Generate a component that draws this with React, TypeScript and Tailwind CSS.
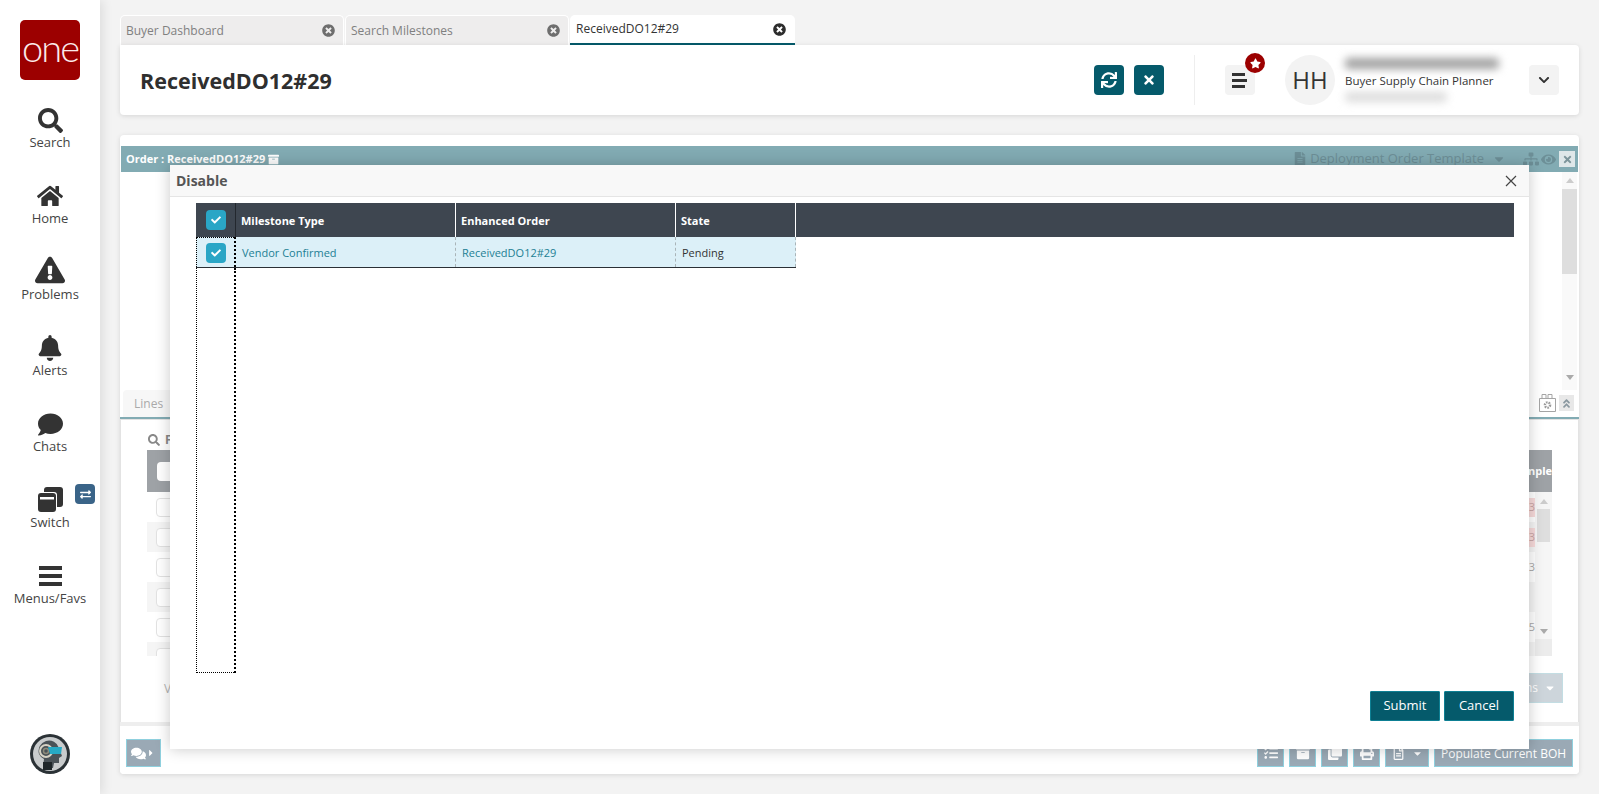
import React from 'react';
import {
  FaSearch, FaHome, FaExclamationTriangle, FaBell, FaComment, FaComments, FaSync, FaTimes, FaStar, FaChevronDown,
  FaCheck, FaTimesCircle, FaExchangeAlt, FaPrint, FaEye, FaCaretDown, FaCaretRight, FaSitemap, FaFileAlt, FaAngleDoubleUp,
  FaClone, FaArchive, FaTasks, FaRegFileAlt,
} from 'react-icons/fa';

const NavItem: React.FC<{ icon: React.ReactNode; label: string; badge?: boolean }> = ({ icon, label, badge }) => (
  <div className="relative flex h-[76px] w-full flex-col items-center">
    <div className="flex h-[28px] items-end justify-center text-[#333333]">{icon}</div>
    <div className="text-[13px] leading-[18px] text-[#444444]">{label}</div>
    {badge && (
      <div className="absolute left-[75px] top-[-1px] flex h-[20px] w-[20px] items-center justify-center rounded-[4px] bg-[#3a6488] text-[11px] text-white">
        <FaExchangeAlt />
      </div>
    )}
  </div>
);

const Sidebar = () => (
  <aside className="relative z-20 flex h-full w-[100px] shrink-0 flex-col items-center bg-white pt-5 shadow-[3px_0_10px_rgba(0,0,0,0.09)]">
    <div className="mb-[25px] flex h-[60px] w-[60px] items-center justify-center rounded-[5px] bg-[#9c0000] pb-[6px] font-['Lato',sans-serif] text-[38px] font-light leading-none tracking-[-2px] text-[#fbeaea]">
      one
    </div>
    <NavItem icon={<FaSearch className="text-[25px]" />} label="Search" />
    <NavItem icon={<FaHome className="text-[26px]" />} label="Home" />
    <NavItem icon={<FaExclamationTriangle className="text-[30px]" />} label="Problems" />
    <NavItem icon={<FaBell className="text-[26px]" />} label="Alerts" />
    <NavItem icon={<FaComment className="text-[25px]" />} label="Chats" />
    <NavItem
      icon={
        <svg width="26" height="26" viewBox="0 0 26 26" fill="#333333">
          <rect x="7" y="0" width="19" height="20" rx="3" />
          <rect x="0" y="5" width="20" height="21" rx="3" fill="#ffffff" />
          <rect x="1" y="6" width="18" height="19" rx="3" />
          <rect x="3" y="10" width="14" height="2.5" fill="#ffffff" />
        </svg>
      }
      label="Switch"
      badge
    />
    <NavItem
      icon={
        <div className="mb-[3px] flex w-[23px] flex-col gap-[4px]">
          <div className="h-[4px] bg-[#333333]" />
          <div className="h-[4px] bg-[#333333]" />
          <div className="h-[4px] bg-[#333333]" />
        </div>
      }
      label="Menus/Favs"
    />
    <div className="mb-5 mt-auto h-[40px] w-[40px]">
      <svg width="40" height="40" viewBox="0 0 40 40">
        <circle cx="20" cy="20" r="20" fill="#2b3236" />
        <circle cx="20" cy="20" r="17" fill="#c9cccd" />
        <path d="M9 20a10 10 0 0 1 20-6l3 8-3 2v5h-5l-1 5H13l1-9a10 10 0 0 1-5-5z" fill="#4a5257" />
        <circle cx="16" cy="17" r="6" fill="none" stroke="#d6d2c4" strokeWidth="2" />
        <circle cx="16" cy="17" r="2.5" fill="none" stroke="#8c8a7a" strokeWidth="1.5" />
        <path d="M18 13h14l-1 7H20z" fill="#27a9c4" />
        <path d="M13 28h9v8h-9z" fill="#1f2629" />
      </svg>
    </div>
  </aside>
);

const Tab: React.FC<{ label: string; active?: boolean }> = ({ label, active }) => (
  <div
    className={
      active
        ? 'flex h-[30px] w-[225px] items-center justify-between rounded-t-[5px] border-b-2 border-[#055a6b] bg-white pl-[6px] pr-[9px] text-[12px] text-[#333333]'
        : 'flex h-[30px] w-[224px] items-center justify-between rounded-t-[5px] border border-b-0 border-white bg-[#eeeded] pl-[5px] pr-[8px] text-[12px] text-[#808080]'
    }
  >
    <span>{label}</span>
    <FaTimesCircle className={active ? 'text-[13px] text-[#2d2d2d]' : 'text-[13px] text-[#6e6e6e]'} />
  </div>
);

const Header = () => (
  <div className="flex h-[70px] items-center rounded-b-[4px] rounded-tr-[4px] bg-white shadow-[0_1px_5px_rgba(0,0,0,0.12)]">
    <h1 className="ml-[20px] pt-[2px] text-[21.5px] font-bold text-[#2f2f2f]">ReceivedDO12#29</h1>
    <div className="ml-auto flex items-center">
      <button className="flex h-[30px] w-[30px] items-center justify-center rounded-[4px] bg-[#055a6b] text-[16px] text-white">
        <FaSync />
      </button>
      <button className="ml-[10px] flex h-[30px] w-[30px] items-center justify-center rounded-[4px] bg-[#055a6b] text-[14px] text-white">
        <FaTimes />
      </button>
      <div className="ml-[30px] h-[50px] w-px bg-[#eeeeee]" />
      <div className="relative ml-[30px] flex h-[30px] w-[30px] flex-col items-start justify-center gap-[3px] rounded-[4px] bg-[#f3f3f3] pl-[7px]">
        <div className="h-[3px] w-[13px] bg-[#333333]" />
        <div className="h-[3px] w-[15px] bg-[#333333]" />
        <div className="h-[3px] w-[13px] bg-[#333333]" />
        <div className="absolute left-[20px] top-[-12px] flex h-[20px] w-[20px] items-center justify-center rounded-full bg-[#9c0000] text-[11px] text-white">
          <FaStar />
        </div>
      </div>
      <div className="ml-[30px] flex h-[50px] w-[50px] items-center justify-center rounded-full bg-[#f3f3f3] text-[24px] text-[#333333]">
        HH
      </div>
      <div className="ml-[5px] flex h-[50px] w-[164px] flex-col justify-between">
        <div className="ml-[5px] mt-[3px] h-[11px] w-[154px] rounded-sm bg-[#a0a0a0] blur-[4px]" />
        <div className="ml-[5px] whitespace-nowrap text-[11.5px] leading-[16px] text-[#333333]">Buyer Supply Chain Planner</div>
        <div className="mb-[3px] ml-[5px] h-[10px] w-[102px] rounded-sm bg-[#dcdcdc] blur-[4px]" />
      </div>
      <button className="ml-[25px] mr-[20px] flex h-[30px] w-[30px] items-center justify-center rounded-[4px] bg-[#f3f3f3] text-[12px] text-[#333333]">
        <FaChevronDown />
      </button>
    </div>
  </div>
);

const backRows = [
  { value: '3', pink: true },
  { value: '3', pink: true },
  { value: '3', pink: false },
  { value: '', pink: false },
  { value: '5', pink: false },
  { value: '', pink: false },
];

const BackgroundOrder = () => (
  <div className="flex h-full flex-col pt-[11px]">
    <div className="mx-px flex h-[26px] shrink-0 items-center bg-[#82abb3] pl-[5px] text-[11px] font-bold text-white">
      <span>Order : ReceivedDO12#29</span>
      <FaArchive className="ml-[3px] text-[11px]" />
      <div className="ml-auto flex items-center pr-[3px] text-[#6d8f97]">
        <FaFileAlt className="text-[14px]" />
        <span className="ml-[3px] text-[13px] font-normal">Deployment Order Template</span>
        <FaCaretDown className="ml-[8px] text-[14px]" />
        <FaSitemap className="ml-[17px] text-[16px]" />
        <FaEye className="ml-[2px] text-[15px]" />
        <div className="ml-[3px] flex h-[16px] w-[16px] items-center justify-center bg-[#dfe7e9] text-[11px] text-[#7d959b]">
          <FaTimes />
        </div>
      </div>
    </div>
    <div className="flex h-[218px] shrink-0 justify-end pr-[2px]">
      <div className="flex w-[15px] flex-col items-center bg-[#f9f9f9]">
        <div className="mt-[6px] h-0 w-0 border-x-[4px] border-b-[5px] border-x-transparent border-b-[#cccccc]" />
        <div className="mt-[6px] h-[85px] w-full bg-[#dedede]" />
        <div className="mb-[10px] mt-auto h-0 w-0 border-x-[4px] border-t-[5px] border-x-transparent border-t-[#aaaaaa]" />
      </div>
    </div>
    <div className="flex h-[27px] shrink-0 items-end justify-between">
      <div className="ml-[3px] flex h-full w-[60px] items-center rounded-t-[4px] bg-[#f7f7f7] pl-[11px] text-[12px] text-[#aaaaaa]">
        Lines
      </div>
      <div className="mb-[5px] mr-[5px] flex items-center gap-[3px]">
        <svg width="17" height="18" viewBox="0 0 17 18" fill="none" stroke="#a5a5a5">
          <path d="M0.5 4.5h16v13h-16zM3 4.5v-4h4v4M9 4.5v-4h4v4" />
          <circle cx="8.5" cy="11" r="2.6" stroke="#999999" strokeWidth="2.4" strokeDasharray="1.6 1" />
        </svg>
        <div className="flex h-[16px] w-[15px] items-center justify-center bg-[#e8e8e8] text-[11px] text-[#8a98a0]">
          <FaAngleDoubleUp />
        </div>
      </div>
    </div>
    <div className="h-[2px] shrink-0 bg-[#82abb3]" />
    <div className="flex min-h-0 flex-1 flex-col border-x border-t border-[#e3e3e3]">
      <div className="flex h-[30px] shrink-0 items-center pl-[27px] pt-[10px] text-[12px] font-bold text-[#888888]">
        <FaSearch className="mr-[5px] text-[12px]" />F
      </div>
      <div className="mx-[26px] flex h-[42px] shrink-0 items-center justify-between bg-[#9ea2a6] pl-[10px] text-[11px] font-bold text-white">
        <div className="h-[19px] w-[19px] rounded-[4px] bg-white" />
        <span className="whitespace-nowrap">nple</span>
      </div>
      <div className="mx-[26px] flex h-[164px] shrink-0">
        <div className="flex-1 overflow-hidden">
          {backRows.map((row, i) => (
            <div key={i} className={i % 2 === 1 ? 'flex h-[30px] items-center justify-between bg-[#f5f5f5] pl-[9px]' : 'flex h-[30px] items-center justify-between pl-[9px]'}>
              <div className="h-[19px] w-[19px] rounded-[4px] border border-[#e2e2e2] bg-white" />
              <div className={row.pink ? 'flex h-[19px] w-[7px] items-center justify-end bg-[#f7dada] text-[11px] text-[#c9a5a5]' : 'flex h-[19px] w-[7px] items-center justify-end text-[11px] text-[#aaaaaa]'}>
                {row.value}
              </div>
            </div>
          ))}
        </div>
        <div className="flex w-[17px] flex-col items-center bg-[#f6f6f6]">
          <div className="mt-[7px] h-0 w-0 border-x-[4px] border-b-[5px] border-x-transparent border-b-[#cccccc]" />
          <div className="mt-[5px] h-[33px] w-[13px] bg-[#dedede]" />
          <div className="mb-[5px] mt-auto h-0 w-0 border-x-[4px] border-t-[5px] border-x-transparent border-t-[#aaaaaa]" />
          <div className="h-[17px] w-full bg-[#ececec]" />
        </div>
      </div>
      <div className="flex h-[65px] shrink-0 justify-between pl-[43px] pr-[15px] pt-[17px]">
        <span className="pt-[7px] text-[12px] text-[#b5b5b5]">V</span>
        <div className="flex h-[30px] w-[60px] items-center justify-end gap-[6px] border border-[#c3dde3] bg-[#cdd5db] pr-[6px] text-[12px] text-white">
          ns <FaCaretDown />
        </div>
      </div>
    </div>
    <div className="flex h-[52px] shrink-0 items-end justify-between rounded-b-[4px] border-t-4 border-[#eeeeee] bg-white px-[6px] pb-[7px]">
      <div className="flex h-[28px] w-[35px] items-center justify-center border border-[#8fd0de] bg-[#9aa9b5] text-white">
        <FaComments className="text-[15px]" />
        <FaCaretRight className="text-[10px]" />
      </div>
      <div className="flex items-center gap-[5px] text-white">
        <ToolButton><FaTasks /></ToolButton>
        <ToolButton><FaArchive /></ToolButton>
        <ToolButton><FaClone /></ToolButton>
        <ToolButton><FaPrint /></ToolButton>
        <div className="flex h-[28px] w-[44px] items-center justify-center gap-[7px] border border-[#8fd0de] bg-[#9aa9b5] text-[13px]">
          <FaRegFileAlt /> <FaCaretDown className="text-[11px]" />
        </div>
        <div className="flex h-[28px] w-[139px] items-center justify-center border border-[#8fd0de] bg-[#9aa9b5] pt-[2px] text-[12px] text-white">
          Populate Current BOH
        </div>
      </div>
    </div>
  </div>
);

const ToolButton: React.FC<{ children: React.ReactNode }> = ({ children }) => (
  <div className="flex h-[28px] w-[27px] items-center justify-center border border-[#8fd0de] bg-[#9aa9b5] text-[14px]">{children}</div>
);

const CheckBox = () => (
  <div className="flex h-[20px] w-[20px] items-center justify-center rounded-[4px] bg-[#2aa6c6] text-[10px] text-white">
    <FaCheck />
  </div>
);

const DisableModal = () => (
  <div className="absolute left-[50px] top-[30px] z-10 flex h-[584px] w-[1359px] flex-col bg-white shadow-[0_0_14px_rgba(0,0,0,0.22)]">
    <div className="flex h-[32px] shrink-0 items-center justify-between border-b border-[#e5e5e5] bg-[#f8f8f8] pl-[6px] pr-[12px]">
      <span className="text-[14px] font-bold text-[#555555]">Disable</span>
      <svg width="12" height="12" viewBox="0 0 12 12" stroke="#444444" strokeWidth="1.2">
        <path d="M1 1l10 10M11 1L1 11" />
      </svg>
    </div>
    <div className="flex flex-1 flex-col pl-[26px] pr-[15px] pt-[6px]">
      <div className="flex h-[34px] shrink-0 bg-[#3e4650] text-[11px] font-bold text-white">
        <div className="flex w-[40px] items-center justify-center border-r border-[#23282e] pl-[1px]">
          <CheckBox />
        </div>
        <div className="flex w-[220px] items-center border-r border-r-white pl-[5px] pt-[3px]">Milestone Type</div>
        <div className="flex w-[220px] items-center border-r border-r-white pl-[5px] pt-[3px]">Enhanced Order</div>
        <div className="flex w-[120px] items-center border-r border-r-white pl-[5px] pt-[3px]">State</div>
      </div>
      <div className="flex h-[31px] w-[600px] shrink-0 border-b border-[#2a2f35] bg-[#dcf0f8] text-[11px]">
        <div className="flex w-[40px] items-center justify-center border-l border-r-2 border-t border-dotted border-black">
          <CheckBox />
        </div>
        <div className="flex w-[220px] items-center border-r border-dashed border-[#a9b4b8] pl-[6px] pt-[2px] text-[#1c7f94]">Vendor Confirmed</div>
        <div className="flex w-[220px] items-center border-r border-dashed border-[#a9b4b8] pl-[6px] pt-[2px] text-[#1c7f94]">ReceivedDO12#29</div>
        <div className="flex w-[120px] items-center border-r border-dashed border-[#a9b4b8] pl-[6px] pt-[2px] text-[#333333]">Pending</div>
      </div>
      <div className="h-[405px] w-[40px] shrink-0 border-b border-l border-r-2 border-dotted border-black" />
      <div className="mt-[18px] flex justify-end gap-[4px]">
        <button className="h-[30px] w-[70px] rounded-[1px] border border-[#0d7f93] bg-[#055a6b] text-[13px] text-white">Submit</button>
        <button className="h-[30px] w-[70px] rounded-[1px] border border-[#0d7f93] bg-[#055a6b] text-[13px] text-white">Cancel</button>
      </div>
    </div>
  </div>
);

export default function App() {
  return (
    <div className="flex h-[794px] w-[1599px] overflow-hidden bg-[#f3f3f3] font-['Open_Sans',sans-serif]">
      <Sidebar />
      <main className="flex min-w-0 flex-1 flex-col pl-5 pr-5 pt-[15px]">
        <div className="flex h-[30px] shrink-0 gap-px">
          <Tab label="Buyer Dashboard" />
          <Tab label="Search Milestones" />
          <Tab label="ReceivedDO12#29" active />
        </div>
        <Header />
        <div className="relative mt-5 h-[639px] shrink-0 rounded-[4px] bg-white shadow-[0_1px_5px_rgba(0,0,0,0.12)]">
          <BackgroundOrder />
          <DisableModal />
        </div>
      </main>
    </div>
  );
}
